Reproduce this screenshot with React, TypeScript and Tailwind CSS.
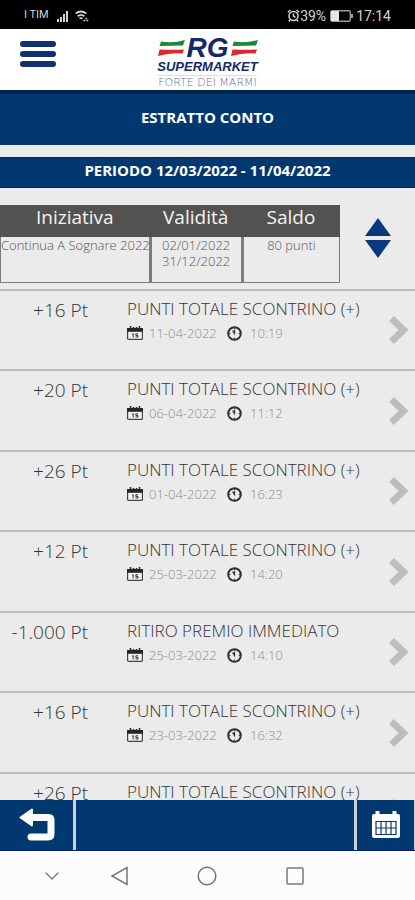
import { ChevronDown } from 'lucide-react';

type Movement = {
  id: number;
  points: string;
  title: string;
  date: string;
  time: string;
};

const movements: Movement[] = [
  { id: 1, points: '+16 Pt', title: 'PUNTI TOTALE SCONTRINO (+)', date: '11-04-2022', time: '10:19' },
  { id: 2, points: '+20 Pt', title: 'PUNTI TOTALE SCONTRINO (+)', date: '06-04-2022', time: '11:12' },
  { id: 3, points: '+26 Pt', title: 'PUNTI TOTALE SCONTRINO (+)', date: '01-04-2022', time: '16:23' },
  { id: 4, points: '+12 Pt', title: 'PUNTI TOTALE SCONTRINO (+)', date: '25-03-2022', time: '14:20' },
  { id: 5, points: '-1.000 Pt', title: 'RITIRO PREMIO IMMEDIATO', date: '25-03-2022', time: '14:10' },
  { id: 6, points: '+16 Pt', title: 'PUNTI TOTALE SCONTRINO (+)', date: '23-03-2022', time: '16:32' },
  { id: 7, points: '+26 Pt', title: 'PUNTI TOTALE SCONTRINO (+)', date: '', time: '' },
];

function StatusBar() {
  return (
    <div className="flex h-[29px] shrink-0 items-center justify-between bg-black px-6 pt-0.5 font-['Roboto',sans-serif] font-normal text-[#d4d4d4]">
      <div className="flex items-center text-[11px]">
        <span>I TIM</span>
        <svg className="ml-2 h-3 w-3" viewBox="0 0 12 12" fill="currentColor">
          <path d="M0 9h2v3H0zM3 7h2v5H3zM6 4h2v8H6zM9 1h2v11H9z" />
        </svg>
        <svg className="ml-1.5 h-3 w-[14px]" viewBox="0 0 14 12" fill="none" stroke="currentColor" strokeWidth="1.8">
          <path d="M.7 3.500q5-4 10.600 0M2.700 6.200q3.300-2.600 6.600 0M4.500 8.600q1.500-1 3 0" />
          <path d="M8.500 10.500h1.800M11.500 10.500h1.800M10.500 8.500h1.500" strokeWidth="1.500" />
        </svg>
      </div>
      <div className="flex items-center text-sm">
        <svg className="h-[13px] w-[13px]" viewBox="0 0 13 13" fill="none" stroke="currentColor" strokeWidth="1.500">
          <circle cx="6.500" cy="7" r="4.500" />
          <path d="M6.500 4.500V7l2 1.500M.8 3.300 3.500 1M12.200 3.300 9.500 1M3 11l-1 1.500M10 11l1 1.500" />
        </svg>
        <span>39%</span>
        <svg className="ml-1 h-3 w-6" viewBox="0 0 24 12">
          <rect x=".7" y=".7" width="19.600" height="10.600" rx="1.500" fill="none" stroke="#9a9a9a" strokeWidth="1.400" />
          <rect x="1" y="1" width="8" height="10" fill="#e5e5e5" />
          <path d="M22 4v4" stroke="#9a9a9a" strokeWidth="2" />
        </svg>
        <span className="ml-0.5">17:14</span>
      </div>
    </div>
  );
}

function Flag() {
  return (
    <svg className="h-4 w-[27px]" viewBox="0 0 27 16">
      <path d="M3 1.500Q15 3.500 27 0L25 5.500Q14 5.500 1.500 6Z" fill="#158a3c" />
      <path d="M1.500 9.500Q14 10 26 9.500L24.500 13.500Q12 12.500 0 16Z" fill="#e0262d" />
    </svg>
  );
}

function Logo() {
  return (
    <div className="flex flex-col items-center text-[#14296b]">
      <div className="flex items-center gap-0.5">
        <Flag />
        <span className="font-['Liberation_Sans',sans-serif] text-[28px] font-bold italic leading-6">RG</span>
        <Flag />
      </div>
      <span className="font-['Liberation_Sans',sans-serif] text-[13px] font-bold italic leading-[14px]">SUPERMARKET</span>
      <span className="mt-px border-t border-[#dcdfe6] font-['DejaVu_Sans',sans-serif] text-[11px] font-extralight leading-[14px] text-[#5f7096]">
        FORTE DEI MARMI
      </span>
    </div>
  );
}

function DateIcon() {
  return (
    <svg className="h-[14px] w-4" viewBox="0 0 16 14">
      <rect x=".6" y="2.600" width="14.800" height="10.800" rx="1" fill="#f4f4f4" stroke="#444" strokeWidth="1.200" />
      <path d="M0 2h16v3.800H0z" fill="#262626" />
      <path d="M3.500 0v3.500M12.500 0v3.500M6.500 1v2M9.500 1v2" stroke="#262626" strokeWidth="1.500" />
      <path d="M5 8.500 6.200 7.500V11.500M11 7.800H8.800v1.600H11V11H8.500" fill="none" stroke="#333" />
    </svg>
  );
}

function TimeIcon() {
  return (
    <svg className="h-[15px] w-[15px]" viewBox="0 0 15 15" fill="none" stroke="#303030">
      <circle cx="7.500" cy="7.500" r="6.300" strokeWidth="2" />
      <path d="M7.500 2v1.500M7.500 11.500V13M2 7.500h1.500M11.500 7.500H13" strokeWidth=".8" />
      <path d="M5.500 4.500 7.500 7.500V4" strokeWidth="1.200" />
    </svg>
  );
}

function MovementRow({ movement }: { movement: Movement }) {
  return (
    <li className="flex h-[81px] shrink-0 border-t-2 border-[#bcbcbc] odd:h-20">
      <span className="w-[88px] shrink-0 pt-[7px] text-right text-[19px] leading-6 text-[#333]">{movement.points}</span>
      <div className="min-w-0 flex-1 pl-[39px] pt-1.5">
        <p className="whitespace-nowrap text-[17px] leading-6 text-[#333]">{movement.title}</p>
        {movement.date && (
          <div className="flex items-center text-[13px] leading-6 text-[#8c8c8c]">
            <DateIcon />
            <span className="ml-1.5 w-[78px]">{movement.date}</span>
            <TimeIcon />
            <span className="ml-2">{movement.time}</span>
          </div>
        )}
      </div>
      <button aria-label="Dettaglio movimento" className="mr-1.5 flex w-5 shrink-0 items-center justify-center">
        <svg className="h-7 w-5" viewBox="0 0 20 28">
          <path d="M2.500 2.500 14.500 14 2.500 25.500" fill="none" stroke="#bdbdbd" strokeWidth="7" />
        </svg>
      </button>
    </li>
  );
}

export default function App() {
  return (
    <div className="flex h-screen flex-col overflow-hidden bg-[#ebebeb] font-['Open_Sans','Noto_Sans',sans-serif] font-light">
      <StatusBar />

      <header className="grid h-[61px] shrink-0 grid-cols-[1fr_auto_1fr] items-start bg-white px-5 pt-[7px]">
        <button aria-label="Menu" className="mt-[5px] flex w-9 flex-col gap-1">
          <span className="h-1.5 w-full rounded-full bg-[#12306f]" />
          <span className="h-1.5 w-full rounded-full bg-[#12306f]" />
          <span className="h-1.5 w-full rounded-full bg-[#12306f]" />
        </button>
        <Logo />
      </header>

      <h1 className="flex h-[55px] shrink-0 items-center justify-center border-t-4 border-[#02234e] bg-[#01386f] pb-1 text-[15px] font-bold text-white">
        ESTRATTO CONTO
      </h1>
      <h2 className="mt-3 flex h-[31px] shrink-0 items-center justify-center border-y border-[#06206a] bg-[#01386f] pb-1 text-[15px] font-bold text-white">
        PERIODO 12/03/2022 - 11/04/2022
      </h2>

      <main className="flex min-h-0 flex-1 flex-col overflow-hidden">
        <div className="mb-1.5 mt-[17px] flex shrink-0 items-center">
          <table className="w-[82%] table-fixed border-separate border-spacing-0">
            <thead>
              <tr className="h-8 bg-[#525250] align-top text-[19px] leading-6 text-[#f5f5f5]">
                <th className="w-[44%] p-0 font-normal">Iniziativa</th>
                <th className="w-[27%] p-0 font-normal">Validità</th>
                <th className="p-0 font-normal">Saldo</th>
              </tr>
            </thead>
            <tbody>
              <tr className="h-[46px] text-center align-top text-[13px] leading-4 text-[#555]">
                <td className="whitespace-nowrap border-b border-l border-r border-[#7c7c7c] p-0">Continua A Sognare 2022</td>
                <td className="border-b border-l-2 border-r border-[#7c7c7c] p-0">
                  02/01/2022
                  <br />
                  31/12/2022
                </td>
                <td className="border-b border-l-2 border-r border-[#7c7c7c] p-0">80 punti</td>
              </tr>
            </tbody>
          </table>
          <button aria-label="Ordina" className="mx-auto mb-3">
            <svg className="h-10 w-[26px]" viewBox="0 0 26 40" fill="#0a3a7e">
              <path d="M13 0 26 18H0zM0 22h26L13 40z" />
            </svg>
          </button>
        </div>

        <ul className="flex flex-col">
          {movements.map((movement) => (
            <MovementRow key={movement.id} movement={movement} />
          ))}
        </ul>
      </main>

      <footer className="flex h-[51px] shrink-0 gap-[3px] border-b border-[#06206a] bg-[#c9cfdc] pr-px">
        <button aria-label="Indietro" className="flex w-[73px] items-center justify-center bg-[#01386f]">
          <svg className="h-9 w-9" viewBox="0 0 36 36" fill="none" stroke="white" strokeWidth="7" strokeLinejoin="round">
            <path d="M12 10.500h17.500q2.500 0 2.500 2.500v14q0 3-3 3H12" strokeLinecap="round" />
            <path d="M1.500 10.500 13 2.500v16z" fill="white" strokeWidth="2" />
          </svg>
        </button>
        <div className="flex-1 bg-[#01386f]" />
        <button aria-label="Calendario" className="flex w-[57px] items-center justify-center bg-[#01386f]">
          <svg className="h-7 w-7" viewBox="0 0 28 28">
            <rect y="3" width="28" height="24" rx="2" fill="white" />
            <path d="M3.500 0h4v4h-4zM20.500 0h4v4h-4z" fill="white" />
            <path d="M4 10.500h20v13H4zM4 17h20M9 10.500v13M14 10.500v13M19 10.500v13" fill="none" stroke="#01386f" strokeWidth="1.200" />
          </svg>
        </button>
      </footer>

      <nav className="flex h-[49px] shrink-0 items-center bg-[#fcfcfc] text-[#777]">
        <button aria-label="Nascondi" className="flex w-1/4 justify-center">
          <ChevronDown className="h-6 w-6" strokeWidth={1.3} />
        </button>
        <button aria-label="Indietro di sistema" className="flex w-[8%] justify-center">
          <svg className="h-5 w-5" viewBox="0 0 20 20" fill="none" stroke="currentColor" strokeWidth="1.500">
            <path d="M17 1.500v17L2 10z" />
          </svg>
        </button>
        <button aria-label="Home" className="flex w-[34%] justify-center">
          <svg className="h-5 w-5" viewBox="0 0 20 20" fill="none" stroke="currentColor" strokeWidth="1.500">
            <circle cx="10" cy="10" r="8.800" />
          </svg>
        </button>
        <button aria-label="Recenti" className="flex w-[8%] justify-center">
          <svg className="h-5 w-5" viewBox="0 0 20 20" fill="none" stroke="currentColor" strokeWidth="1.500">
            <rect x="2" y="2" width="16" height="16" rx="1" />
          </svg>
        </button>
      </nav>
    </div>
  );
}
